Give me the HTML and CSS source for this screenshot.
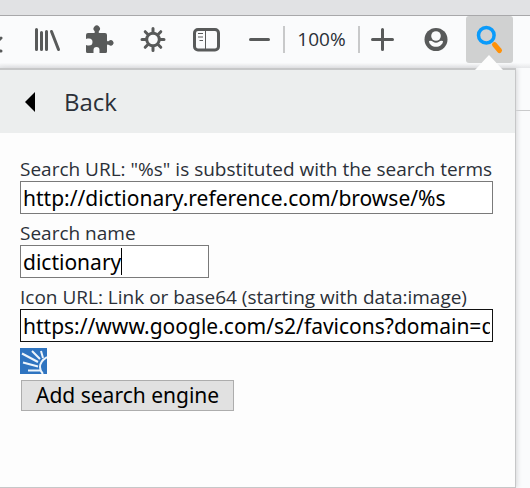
FILE: index.html
```html
<!DOCTYPE html>
<html lang="en">
<head>
<meta charset="utf-8">
<title>Add search engine</title>
<link rel="stylesheet" href="styles.css">
</head>
<body>
<div class="tabstrip"></div>
<header class="toolbar">
  <button class="tool" type="button" aria-label="Downloads">
    <svg viewBox="0 0 47 47"><path class="line" d="M24 28l6-6M16 35h14"/></svg>
  </button>
  <button class="tool" type="button" aria-label="Library">
    <svg viewBox="0 0 47 47"><path class="line" d="M12.500 13.500v20M17.500 16.500v17M22.500 15.500v18M27.500 15.500l7 18"/></svg>
  </button>
  <button class="tool" type="button" aria-label="Extensions">
    <svg viewBox="0 0 47 47"><path class="fill" d="M11 17h6c1 0 1-1 .5-2a3.200 3.200 0 1 1 4.500 0c-.5 1-.5 2 .5 2h5.500a2 2 0 0 1 2 2v5c0 1.500 1 1.500 2 .7a2.800 2.800 0 1 1 0 4.300c-1-.8-2-.8-2 .5v6a1.500 1.500 0 0 1-1.500 1.500h-6v-3a3 3 0 0 0-6 0v3h-6A1.500 1.500 0 0 1 9 35.500V29c1 .5 2 .5 3 .5a3.500 3.500 0 0 0 0-7c-1 0-2 0-3 .5v-4a2 2 0 0 1 2-2z"/></svg>
  </button>
  <button class="tool" type="button" aria-label="Settings">
    <svg viewBox="0 0 47 47"><circle class="line" cx="23" cy="23.500" r="6.300"/><path class="line" d="M23 12.500v4M23 30.500v4M12 23.500h4M30 23.500h4M15.200 15.700l3 3M27.800 28.300l3 3M15.200 31.300l3-3M27.800 18.700l3-3"/></svg>
  </button>
  <button class="tool" type="button" aria-label="Sidebars">
    <svg viewBox="0 0 47 47"><rect class="line" x="11.500" y="13.500" width="24" height="20.500" rx="3.500"/><path class="thin" d="M22.500 14v20M15 17.500h5M15 21h5M16.500 24.500h3.500"/></svg>
  </button>
  <div class="zoom">
    <button class="tool" type="button" aria-label="Zoom out">
      <svg viewBox="0 0 47 47"><path class="line" d="M14.500 23.500h18"/></svg>
    </button>
    <span class="zoom-level">100%</span>
    <button class="tool" type="button" aria-label="Zoom in">
      <svg viewBox="0 0 47 47"><path class="line" d="M12.500 23.500h20M22.500 13.500v20"/></svg>
    </button>
  </div>
  <button class="tool" type="button" aria-label="Account">
    <svg viewBox="0 0 47 47"><circle class="fill" cx="23" cy="23.500" r="11.500"/><circle class="hollow" cx="23" cy="20" r="4.800"/><path class="hollow" d="M16 25q2.500-1 4 .8 3 1.800 6 0 1.500-1.800 4-.8c0 3.500-3.500 5.800-7 5.800s-7-2.300-7-5.800z"/></svg>
  </button>
  <button class="tool active" type="button" aria-label="Search">
    <svg viewBox="0 0 47 47"><circle cx="20.300" cy="19.300" r="7.800" fill="none" stroke="#0a9bfb" stroke-width="3.500"/><path d="M28.500 28.700l5 5.800" fill="none" stroke="#ff9108" stroke-width="5" stroke-linecap="round"/></svg>
  </button>
</header>
<main class="content">
  <section class="popup">
    <button class="back" type="button">
      <svg class="back-arrow" viewBox="0 0 10 20"><path d="M10 0v20L0 10z"/></svg>
      <span>Back</span>
    </button>
    <form class="form">
      <label for="url">Search URL: "%s" is substituted with the search terms</label>
      <input id="url" type="text" value="http://dictionary.reference.com/browse/%s">
      <label for="name">Search name</label>
      <div class="short">
        <input id="name" type="text" value="dictionary">
        <span class="caret"></span>
      </div>
      <label for="icon">Icon URL: Link or base64 (starting with data:image)</label>
      <input id="icon" class="current" type="text" value="https://www.google.com/s2/favicons?domain=dictionary.com">
      <svg class="favicon" viewBox="0 0 27 26"><path fill="#2f74c0" d="M0 0h27v26H0z"/><path d="M2 5.500L18 14M12 3l8 8M21 3l2 7M3 14.500l15 4M8 22.500h12M27 9q-7 4-7 10 0 4 3 7" fill="none" stroke="#eef5fb" stroke-width="2"/></svg>
      <button class="add" type="button">Add search engine</button>
    </form>
  </section>
  <div class="page"></div>
</main>
</body>
</html>
```
FILE: styles.css
```css
* {
  box-sizing: border-box;
}

body {
  margin: 0;
  min-height: 100vh;
  display: flex;
  flex-direction: column;
  background: #fafbfc;
  color: #2b3038;
  font-family: "Open Sans", "Noto Sans", sans-serif;
  font-size: 19px;
}

button {
  border: 0;
  padding: 0;
  background: none;
  color: inherit;
  font: inherit;
}

.tabstrip {
  height: 16px;
  background: #e1e2e4;
  border-bottom: 1px solid #a8a8aa;
}

.toolbar {
  display: flex;
  justify-content: flex-end;
  gap: 6px;
  padding: 0 17px 5px 0;
  overflow: hidden;
  background: linear-gradient(#fafbfc 90%, #e6e7e9);
}

.tool {
  flex: none;
  width: 47px;
  height: 47px;
  border-radius: 3px;
}

.tool svg {
  display: block;
  width: 47px;
  height: 47px;
}

.active {
  background: #d0d1d1;
}

.line {
  fill: none;
  stroke: #585a5a;
  stroke-width: 3;
  stroke-linecap: round;
}

.thin {
  fill: none;
  stroke: #585a5a;
  stroke-width: 1;
}

.fill {
  fill: #585a5a;
}

.hollow {
  fill: #fafbfc;
}

.zoom {
  display: flex;
  align-items: center;
}

.zoom-level {
  width: 77px;
  border: solid #c8c9ca;
  border-width: 0 2px;
  line-height: 27px;
  text-align: center;
}

.content {
  flex: 1;
  display: flex;
}

.popup {
  position: relative;
  flex: 1;
  background: #fdfdfd;
  border: solid #c6c7c8;
  border-width: 2px 1px 1px 0;
  box-shadow: 1px 0 5px #d5d6d8;
}

.popup::before {
  content: "";
  position: absolute;
  top: -15px;
  right: 12px;
  width: 28px;
  height: 15px;
  background: #fdfdfd;
  clip-path: polygon(50% 0, 100% 100%, 0 100%);
}

.back {
  display: flex;
  align-items: center;
  gap: 29px;
  width: 100%;
  height: 63px;
  padding: 0 25px;
  background: #eceeee;
  font-size: 24px;
}

.back-arrow {
  width: 10px;
  height: 20px;
}

.form {
  display: flex;
  flex-direction: column;
  align-items: flex-start;
  padding: 24px 22px 20px 20px;
}

label {
  line-height: 24px;
  white-space: nowrap;
}

input {
  width: 100%;
  height: 33px;
  margin-bottom: 7px;
  padding: 0 2px;
  border: 1px solid #7a7a7a;
  border-radius: 0;
  background: #fff;
  color: #000;
  font-family: "Noto Sans", sans-serif;
  font-size: 21px;
}

.current {
  margin-bottom: 6px;
  border-color: #111;
}

.short {
  position: relative;
  width: 189px;
}

.caret {
  position: absolute;
  top: 3px;
  left: 101px;
  width: 1px;
  height: 27px;
  background: #000;
}

.favicon {
  width: 27px;
  height: 26px;
  margin-bottom: 6px;
}

.add {
  margin-left: 1px;
  padding: 0 14px;
  border: 1px solid #adadad;
  background: #e1e1e1;
  color: #000;
  font-family: "Noto Sans", sans-serif;
  font-size: 21px;
  line-height: 29px;
}

.page {
  width: 14px;
  height: 43px;
  border-bottom: 1px solid #c9cacb;
}
```
